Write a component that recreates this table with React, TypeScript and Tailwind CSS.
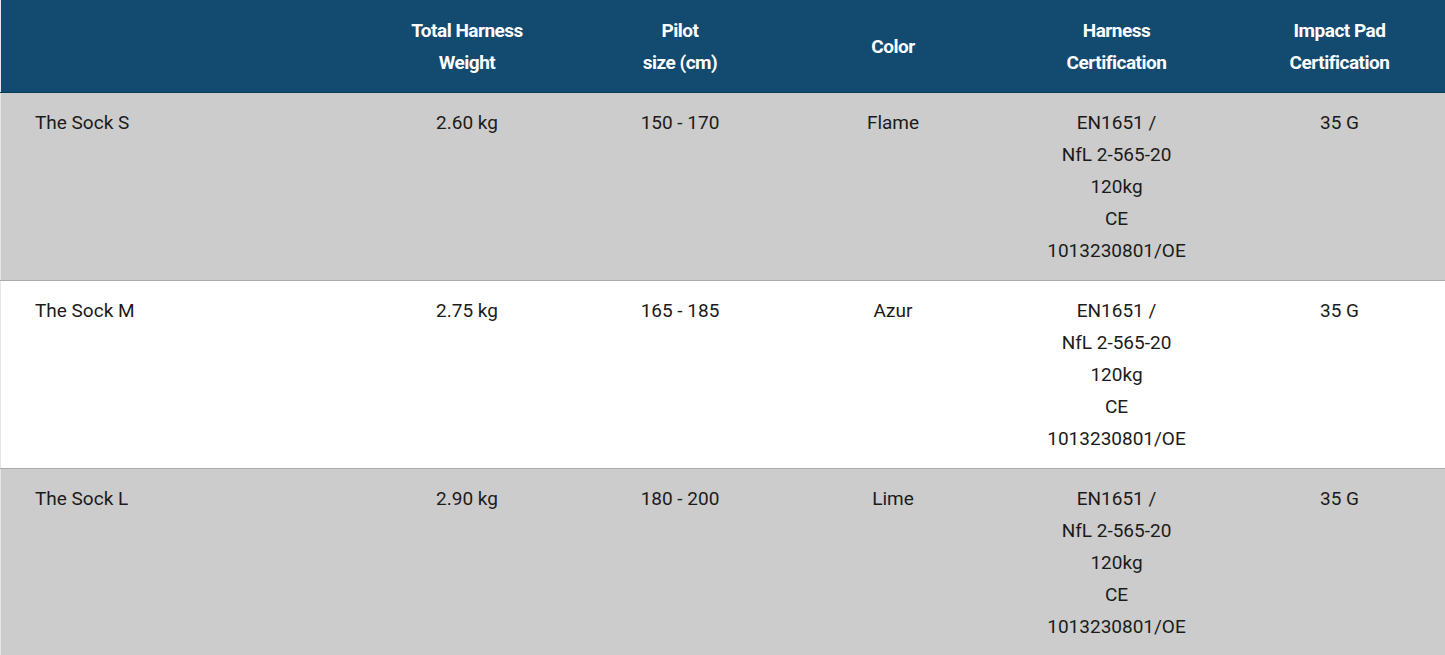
const rows = [
  { name: 'The Sock S', weight: '2.60 kg', size: '150 - 170', color: 'Flame', bg: 'bg-[#cccccc]' },
  { name: 'The Sock M', weight: '2.75 kg', size: '165 - 185', color: 'Azur', bg: 'bg-white' },
  { name: 'The Sock L', weight: '2.90 kg', size: '180 - 200', color: 'Lime', bg: 'bg-[#cccccc]' },
];

const cert = ['EN1651 /', 'NfL 2-565-20', '120kg', 'CE', '1013230801/OE'];

export default function App() {
  return (
    <div className="w-[1445px] bg-white font-['Roboto',sans-serif] text-[19px] leading-[32px] text-[#1b1b1b]">
      <table className="w-full table-fixed border-collapse border-l border-[#e6e6e6]">
        <colgroup>
          <col className="w-[360px]" />
          <col className="w-[213px]" />
          <col className="w-[213px]" />
          <col className="w-[213px]" />
          <col className="w-[234px]" />
          <col className="w-[212px]" />
        </colgroup>
        <thead>
          <tr className="bg-[#134a6f] text-white font-bold tracking-[-0.5px] border-b border-[#0d3a57]">
            <th className="pt-[15px] pb-[13px]"></th>
            <th className="pt-[15px] pb-[13px] text-center">Total Harness<br />Weight</th>
            <th className="pt-[15px] pb-[13px] text-center">Pilot<br />size (cm)</th>
            <th className="pt-[15px] pb-[13px] text-center">Color</th>
            <th className="pt-[15px] pb-[13px] text-center">Harness<br />Certification</th>
            <th className="pt-[15px] pb-[13px] text-center">Impact Pad<br />Certification</th>
          </tr>
        </thead>
        <tbody>
          {rows.map((r) => (
            <tr key={r.name} className={`${r.bg} border-b border-[#ababab] align-top`}>
              <td className="pl-[34px] pt-[14px] text-left">{r.name}</td>
              <td className="pt-[14px] text-center">{r.weight}</td>
              <td className="pt-[14px] text-center">{r.size}</td>
              <td className="pt-[14px] text-center">{r.color}</td>
              <td className="pt-[14px] pb-[13px] text-center">
                {cert.map((c) => (
                  <div key={c}>{c}</div>
                ))}
              </td>
              <td className="pt-[14px] text-center">35 G</td>
            </tr>
          ))}
        </tbody>
      </table>
    </div>
  );
}
